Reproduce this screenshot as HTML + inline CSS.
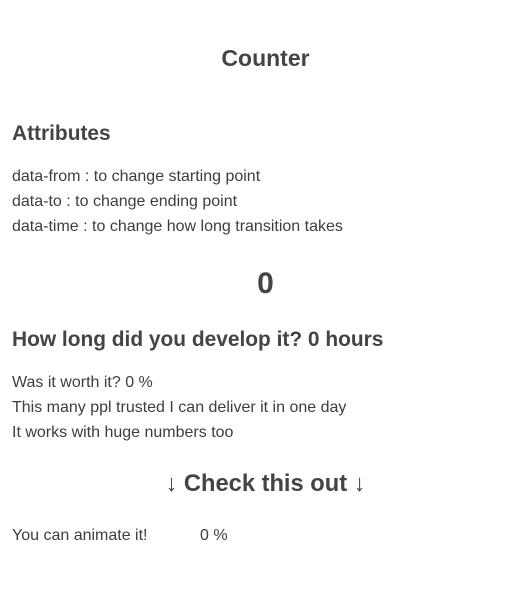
<!DOCTYPE html>
<html><head><meta charset="utf-8"><style>
body{margin:0;width:531px;height:597px;background:#fff;color:#444;font-family:"Liberation Sans",sans-serif;position:relative;overflow:hidden}
div{position:absolute;white-space:nowrap;line-height:1}
.p{font-size:16px;left:12px;color:#3d3d3d}
.h{font-size:20.9px;left:12px;font-weight:bold}
.c{left:0;width:531px;text-align:center;font-weight:bold}
</style></head><body>
<div class="c" style="top:47px;font-size:23px">Counter</div>
<div class="h" style="top:124px">Attributes</div>
<div class="p" style="top:169px">data-from : to change starting point</div>
<div class="p" style="top:194px">data-to : to change ending point</div>
<div class="p" style="top:219px">data-time : to change how long transition takes</div>
<div class="c" style="top:269px;font-size:30px">0</div>
<div class="h" style="top:330px">How long did you develop it? 0 hours</div>
<div class="p" style="top:375px">Was it worth it? 0 %</div>
<div class="p" style="top:400px">This many ppl trusted I can deliver it in one day</div>
<div class="p" style="top:425px">It works with huge numbers too</div>
<div class="c" style="top:473px;font-size:23.7px">↓ Check this out ↓</div>
<div class="p" style="top:528px">You can animate it!</div>
<div class="p" style="top:528px;left:200px">0 %</div>
</body></html>
